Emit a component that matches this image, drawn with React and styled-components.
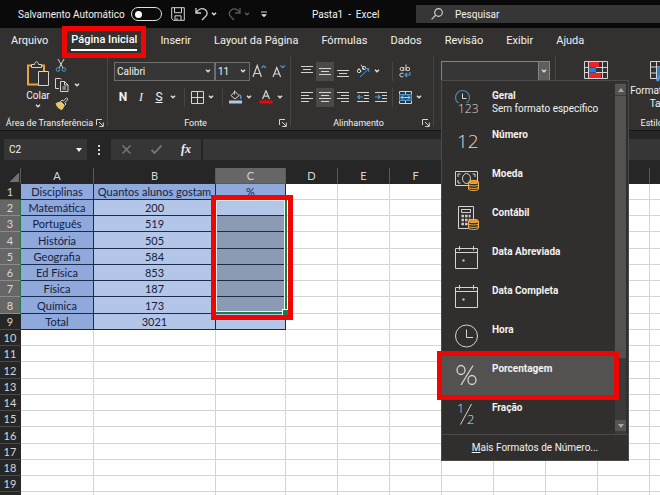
import React from "react";
import styled, { createGlobalStyle, css } from "styled-components";

const GlobalStyle = createGlobalStyle`
  * { box-sizing: border-box; }
  html, body { margin: 0; height: 100%; }
  body { background: #262626; overflow: hidden; }
  body, button, input, select { font-family: Roboto, "Open Sans", sans-serif; font-size: 10px; color: #f3f2f1; }
  button { background: none; border: 0; padding: 0; }
  svg { display: block; flex: none; fill: none; }
`;

/* ---------- shell ---------- */

const Page = styled.div`
  display: flex;
  flex-direction: column;
  height: 100vh;
  overflow: hidden;
  background: #262626;
`;

const TitleBar = styled.header`
  display: flex;
  align-items: center;
  flex: none;
  height: 28px;
  padding-left: 18px;
  background: #0a0a0a;
  white-space: nowrap;
`;

const AutoSave = styled.label`
  display: flex;
  align-items: center;
  gap: 6px;
  width: 153px;
`;

const Switch = styled.input`
  appearance: none;
  display: flex;
  align-items: center;
  flex: none;
  width: 31px;
  height: 14px;
  margin: 0 12px 0 auto;
  padding-left: 3px;
  border: 1px solid #e1dfdd;
  border-radius: 7px;
  &::before {
    content: "";
    width: 7px;
    height: 7px;
    border-radius: 50%;
    background: #fff;
  }
`;

const QuickAccess = styled.div`
  display: grid;
  grid-template-columns: 24px 14px 19px 14px 18px 1fr;
  align-items: center;
  width: 122px;
`;

const DocTitle = styled.h1`
  flex: 1 1 0;
  margin: 0;
  padding-left: 19px;
  font-size: 10px;
  font-weight: 400;
`;

const SearchBox = styled.label`
  display: flex;
  align-items: center;
  gap: 12px;
  flex: none;
  width: 38%;
  height: 18px;
  padding-left: 15px;
  background: #363636;
`;

const BareInput = styled.input`
  min-width: 0;
  flex: 1;
  padding: 0;
  border: 0;
  outline: 0;
  background: transparent;
  &::placeholder { color: #f3f2f1; opacity: 1; }
`;

const TabBar = styled.nav`
  display: flex;
  align-items: center;
  gap: 23px;
  flex: none;
  height: 26px;
  padding-left: 11px;
  background: #323130;
`;

const Tab = styled.button`
  position: relative;
  height: 20px;
  font-size: 11px;
  line-height: 18px;
  white-space: nowrap;
  ${(p) =>
    p.$active &&
    css`
      font-weight: 500;
      border-bottom: 2px solid #fff;
      color: #fff;
      z-index: 2;
      &::after {
        content: "";
        position: absolute;
        inset: -5px -9px -9px;
        border: 5px solid #f00505;
      }
    `}
`;

/* ---------- ribbon ---------- */

const Ribbon = styled.div`
  display: flex;
  flex: none;
  height: 77px;
  background: #323130;
  border-bottom: 1px solid #161616;
`;

const Group = styled.section`
  display: flex;
  flex-direction: column;
  flex: none;
  width: ${(p) => p.$width}px;
  background: linear-gradient(#484644, #484644) right 1px top 2px / 1px 70px no-repeat;
`;

const GroupBody = styled.div`
  display: flex;
  flex: 1;
  flex-direction: ${(p) => (p.$column ? "column" : "row")};
  padding: 4px 0 0 ${(p) => p.$inset || 0}px;
`;

const GroupFooter = styled.div`
  display: grid;
  grid-template-columns: 1fr 12px;
  align-items: center;
  height: 15px;
  padding: 0 1px 0 3px;
  font-size: 9px;
  text-align: center;
  white-space: nowrap;
`;

const ToolRow = styled.div`
  display: grid;
  grid-template-columns: ${(p) => p.$columns};
  align-items: center;
  height: 26px;
`;

const Tool = styled.button`
  display: grid;
  place-items: center;
  width: ${(p) => p.$width || 18}px;
  height: 19px;
  background: ${(p) => (p.$pressed ? "#4a4948" : "transparent")};
  font-size: 12px;
  font-weight: ${(p) => (p.$bold ? 700 : 400)};
  font-style: ${(p) => (p.$italic ? "italic" : "normal")};
  font-family: ${(p) => (p.$italic ? '"Liberation Serif", serif' : "inherit")};
  text-decoration: ${(p) => (p.$underline ? "underline" : "none")};
`;

const BigTool = styled.button`
  display: flex;
  flex-direction: column;
  align-items: center;
  gap: 2px;
  flex: none;
  width: ${(p) => p.$width}px;
  line-height: 13px;
  padding-top: 3px;
`;

const SmallStack = styled.div`
  display: flex;
  flex-direction: column;
  gap: 6px;
  padding-top: 1px;
`;

const StackRow = styled.div`
  display: flex;
  align-items: center;
  gap: 5px;
  height: 13px;
`;

const Divider = styled.span`
  width: 1px;
  height: 19px;
  background: #484644;
`;

const PickerBox = styled.span`
  display: grid;
  align-items: center;
  width: 100%;
  border: 1px solid #6f6d6b;
  background: #363636;
  height: 19px;
  & > * { grid-area: 1 / 1; }
  & > svg { justify-self: end; margin-right: 3px; pointer-events: none; }
`;

const PickerSelect = styled.select`
  appearance: none;
  width: 100%;
  height: 17px;
  padding: 0 2px;
  border: 0;
  background: transparent;
`;

const FormatPicker = styled.div`
  position: relative;
  display: flex;
  width: 109px;
  height: 20px;
  margin-top: 3px;
  border: 1px solid #85827f;
  background: #363636;
`;

const DropButton = styled.button`
  display: grid;
  place-items: center;
  width: 11px;
  background: #605e5c;
  border-left: 1px solid #85827f;
`;

/* ---------- format menu ---------- */

const Menu = styled.div`
  position: absolute;
  top: 18px;
  left: -1px;
  z-index: 5;
  width: 188px;
  border: 1px solid #4b4a48;
  background: #302f2d;
`;

const MenuScroll = styled.div`
  display: grid;
  grid-template-columns: 1fr 11px;
  gap: 1px;
  padding: 2px 2px 0 0;
`;

const MenuItem = styled.button`
  display: grid;
  grid-template-columns: 34px 1fr;
  gap: 16px;
  width: 100%;
  height: 39px;
  padding-top: 6px;
  text-align: left;
  line-height: 13px;
  background: ${(p) => (p.$active ? "#535250" : "transparent")};
  outline: ${(p) => (p.$active ? "5px solid #f00505" : "none")};
  position: relative;
  z-index: ${(p) => (p.$active ? 1 : 0)};
  & > svg { justify-self: end; margin-right: -3px; }
  strong { display: block; font-weight: 700; }
`;

const ScrollTrack = styled.div`
  display: grid;
  grid-template-rows: 11px 262px 1fr 11px;
  gap: 1px;
  padding-top: 1px;
  padding-bottom: 3px;
  background: #3b3a39;
`;

const ScrollArrow = styled.button`
  display: grid;
  place-items: center;
  background: #555453;
`;

const ScrollThumb = styled.span`
  background: #535250;
`;

const MenuFooter = styled.button`
  width: 100%;
  height: 26px;
  border-top: 1px solid #4b4a48;
  text-align: center;
`;

/* ---------- formula bar ---------- */

const FormulaBar = styled.div`
  display: flex;
  flex: none;
  gap: 2px;
  height: 37px;
  padding: 8px 0 8px 4px;
`;

const NameBox = styled.label`
  display: flex;
  align-items: center;
  width: 83px;
  padding: 0 5px;
  background: #363636;
`;

const Dots = styled.span`
  display: grid;
  place-items: center;
  width: 20px;
`;

const FormulaTools = styled.div`
  display: grid;
  grid-template-columns: repeat(3, 1fr);
  place-items: center;
  width: 90px;
  background: #363636;
`;

const FormulaInput = styled.input`
  flex: 1;
  min-width: 0;
  border: 0;
  padding: 0 6px;
  background: #363636;
`;

const FxButton = styled.button`
  font: italic 700 12px "Liberation Serif", serif;
`;

/* ---------- sheet ---------- */

const Sheet = styled.main`
  position: relative;
  flex: 1;
  min-height: 0;
  overflow: hidden;
  background: #fff;
`;

const Grid = styled.table`
  table-layout: fixed;
  width: 702px;
  border-collapse: separate;
  border-spacing: 0;
  font: 11px/15px Lato, "Open Sans", sans-serif;
  color: #14213d;
  tr { height: 16px; }
  tbody tr:nth-child(4n) { height: 17px; }
`;

const ColHead = styled.th`
  padding: 0;
  height: 16px;
  font-weight: 400;
  color: #d6d6d6;
  background: ${(p) => (p.$selected ? "#666" : "#262626")};
  border-right: 1px solid #5a5a5a;
  border-bottom: 1px solid ${(p) => (p.$selected ? "#1f7a48" : "#262626")};
`;

const Corner = styled(ColHead)`
  background: linear-gradient(135deg, transparent 50%, #707070 50%) 9px 4px / 10px 10px no-repeat #262626;
`;

const RowHead = styled.th`
  padding: 0;
  font-weight: 400;
  color: #d6d6d6;
  background: ${(p) => (p.$selected ? "#666" : "#262626")};
  border-bottom: 1px solid ${(p) => (p.$selected ? "#8a8a8a" : "#4a4a4a")};
  border-right: 1px solid ${(p) => (p.$selected ? "#1f7a48" : "#262626")};
`;

const cellFill = { plain: "#fff", header: "#8fa9dc", value: "#b4c6e7", picked: "#8c9ab4" };

const Cell = styled.td`
  padding: 0;
  text-align: center;
  white-space: nowrap;
  overflow: hidden;
  background: ${(p) => cellFill[p.$kind]};
  border-right: 1px solid ${(p) => (p.$kind === "plain" ? "#d4d4d4" : "#1d2b4a")};
  border-bottom: 1px solid ${(p) => (p.$kind === "plain" ? "#d4d4d4" : "#1d2b4a")};
`;

const SelectionMark = styled.div`
  position: absolute;
  top: 27px;
  left: 211px;
  width: 82px;
  height: 125px;
  border: 5px solid #f00505;
`;

const SelectionRange = styled.div`
  position: relative;
  width: 71px;
  height: 114px;
  border: solid #1f7a48;
  border-width: 0 2px 2px 0;
  box-shadow: inset 1px 1px 0 #e9f3ec, inset -1px -1px 0 #e9f3ec;
  &::after {
    content: "";
    position: absolute;
    right: -3px;
    bottom: -3px;
    width: 5px;
    height: 5px;
    background: #1f7a48;
    border: solid #fff;
    border-width: 1px 0 0 1px;
  }
`;

/* ---------- icons ---------- */

const Svg = ({ w, h, children, ...rest }) => (
  <svg width={w} height={h} viewBox={`0 0 ${w} ${h}`} stroke="#d6d4d2" aria-hidden="true" {...rest}>
    {children}
  </svg>
);

const GlyphText = styled.text`
  font-family: "Open Sans", sans-serif;
  font-weight: 300;
  fill: #dcdad8;
  stroke: none;
`;

const Chevron = ({ color = "#e6e4e2" }) => (
  <Svg w={6} h={4} stroke={color} strokeWidth="1.3"><path d="M1 .7 3 2.8 5 .7" /></Svg>
);

const Launcher = () => (
  <Svg w={8} h={8}><path d="M.5 6V.5H6M3 3l4 4M7.3 3.5v4h-4" /></Svg>
);

const SaveIcon = () => (
  <Svg w={14} h={14}><path d="M.7.7h12.6v12.6H2.5L.7 11.6zM3.5.7v5h7v-5M4 13.3V8.8h6v4.5M6 13v-2" /></Svg>
);

const UndoIcon = () => (
  <Svg w={14} h={14} strokeWidth="1.3"><path d="M1 1v5h5M1 6c2-4 6-5.500 9-3.500 3 2.500 2.500 5 .5 7L7 13" /></Svg>
);

const RedoIcon = () => (
  <Svg w={14} h={14} stroke="#5a5a5a" strokeWidth="1.3"><path d="M12 1v5H7M12 6C10 2 6 .8 3.200 3 .5 5.500 1 8 2.800 9.800L6 13" /></Svg>
);

const CustomizeIcon = () => (
  <Svg w={8} h={7}><path d="M1 1h6" /><path d="M1 3.200h6L4 6.200z" fill="#e6e4e2" stroke="none" /></Svg>
);

const SearchIcon = () => (
  <Svg w={12} h={12} strokeWidth="1.2"><circle cx="7.500" cy="4.500" r="3.800" /><path d="M4.800 7.200.6 11.400" /></Svg>
);

const PasteIcon = () => (
  <Svg w={24} h={26}>
    <path d="M12 23.500H2V4.500h4M14 4.500h4V10" stroke="#e8a33d" strokeWidth="2" />
    <path d="M5.500 6.500v-3h3C8.500 0 12.500 0 12.500 3.500h3v3z" fill="#323130" />
    <path d="M12.500 10.500h10v14h-10z" fill="#323130" />
  </Svg>
);

const CutIcon = () => (
  <Svg w={12} h={13}>
    <path d="M3 0l5 9M9 0 4 9" />
    <circle cx="3" cy="10.500" r="1.800" stroke="#4a9bd4" /><circle cx="9" cy="10.500" r="1.800" stroke="#4a9bd4" />
  </Svg>
);

const CopyIcon = () => (
  <Svg w={14} h={14}>
    <path d="M4 10.500H.5V.5h5l1 1M5.500 3.500h4l3.500 3.500v6.500H5.500zM9.500 3.500V7H13M7.500 9h3.500M7.500 11h3.500" />
  </Svg>
);

const BrushIcon = () => (
  <Svg w={14} h={13}>
    <path d="M1 6.500 5 5l4 4-2 3.500C4 12 2 10 1 6.500z" fill="#e9c46a" stroke="#e9c46a" />
    <path d="M5.500 4.500l4 4 1.500-1.500-1.200-1.300L13 2.200 11.500.8 8.300 4 7 3z" fill="#323130" />
  </Svg>
);

const GrowIcon = ({ down }) => (
  <Svg w={15} h={14} strokeWidth="1.200">
    <path d={down ? "M1 13 4.800 3.500 8.600 13M2.300 10h5" : "M1 13 5.200 1.500 9.400 13M2.500 9.500h5.400"} />
    <path d={down ? "M8.500 1.500l2.200 2.200 2.200-2.200" : "M9.500 4l2.200-2.200L13.900 4"} stroke="#4a9bd4" />
  </Svg>
);

const BordersIcon = () => (
  <Svg w={13} h={13}><path d="M.5.5h12v12H.5zM6.500.5v12M.5 6.500h12" /></Svg>
);

const FillIcon = () => (
  <Svg w={15} h={14}>
    <path d="M6.500.5v4M3 5.500 7 1.500l4 4-4 3.500z" />
    <path d="M11.500 4.500c1.500 1 1.500 3 1 4.500" stroke="#4a9bd4" strokeWidth="1.500" />
    <path d="M1 10.500h13v3H1z" fill="#b4c6e7" stroke="none" />
  </Svg>
);

const FontColorIcon = () => (
  <Svg w={14} h={14}>
    <path d="M3.500 9 7 .8 10.500 9M4.700 6.200h4.600" strokeWidth="1.200" />
    <path d="M.5 10.500h13v3H.5z" fill="#f00505" stroke="none" />
  </Svg>
);

const lineSets = {
  top: [[0, 12, 0], [2, 10, 3], [0, 12, 6]],
  middle: [[0, 12, 2], [2, 10, 5], [0, 12, 8]],
  bottom: [[0, 12, 4], [2, 10, 7], [0, 12, 10]],
  left: [[0, 12, 0], [0, 8, 3], [0, 12, 6], [0, 8, 9]],
  center: [[0, 12, 0], [2, 10, 3], [0, 12, 6], [2, 10, 9]],
  right: [[0, 12, 0], [4, 12, 3], [0, 12, 6], [4, 12, 9]],
};

const AlignIcon = ({ kind }) => (
  <Svg w={12} h={11}>
    {lineSets[kind].map(([a, b, y]) => <path key={y} d={`M${a} ${y + 0.5}H${b}`} />)}
  </Svg>
);

const OrientationIcon = () => (
  <Svg w={14} h={14}>
    <circle cx="3" cy="7" r="1.700" /><path d="M2.500 4l2.700 4M5 .8l3.500 5" />
    <circle cx="8" cy="4" r="1.700" />
    <path d="M4 13l8.500-8M9 4.500h3.800V8" stroke="#4a9bd4" />
  </Svg>
);

const WrapIcon = () => (
  <Svg w={12} h={14}>
    <circle cx="2.800" cy="5" r="1.700" /><path d="M4.800 3v4M7 .5v6.500" /><circle cx="9" cy="5" r="1.700" />
    <path d="M4.500 9.500C2.500 8.500.8 9.500.8 11s1.500 2.500 3.500 1.500" />
    <path d="M10.800 8v3H6M8 9l-2 2 2 2" stroke="#4a9bd4" strokeWidth="1.200" />
  </Svg>
);

const IndentIcon = ({ right }) => (
  <Svg w={13} h={11}>
    <path d="M0 .5h12M7 3.500h5M7 6.500h5M0 9.500h12" />
    <path d={right ? "M0 5h5M3 3l2 2-2 2" : "M.8 5h5M2.800 3l-2 2 2 2"} stroke="#4a9bd4" strokeWidth="1.200" />
  </Svg>
);

const MergeIcon = () => (
  <Svg w={13} h={13}>
    <path d="M.5 3.500h12v6H.5z" fill="#26587a" stroke="#4a9bd4" />
    <path d="M.5 3V.5h12V3M6.500.5V3M.5 10v2.500h12V10M6.500 10v2.500" />
    <path d="M2 6.500h9M4 4.500l-2 2 2 2M9 4.500l2 2-2 2" stroke="#9fd0f2" />
  </Svg>
);

const CondFormatIcon = () => (
  <Svg w={24} h={18}>
    <path d="M5 1h10v5H5zM5 12h12v5.500H5z" fill="#e8252b" stroke="none" />
    <path d="M5 6.500h7v5H5z" fill="#2b7cd3" stroke="none" />
    <path d="M.5.500h23v17H.5zM.5 6.500h4.500M12 6.500h11.500M.5 11.500h4.500M12 11.500h11.500M4.500.5v17M18.500.500v17" />
  </Svg>
);

const TableFormatIcon = () => (
  <Svg w={30} h={21}>
    <path d="M.5.5h23v17H.5zM.5 6h23M.5 12h23M6.500.5v17M15 .5v17" />
    <path d="M7 6.500h16v11H7z" fill="#2b7cd3" stroke="none" />
    <path d="M7 20 10 15" stroke="#4a9bd4" strokeWidth="3" />
  </Svg>
);

const Coins = ({ x, y }) => (
  <g transform={`translate(${x} ${y})`} stroke="#f0b14a">
    <path d="M.5 2v7c0 2 10 2 10 0V2" fill="#302f2d" />
    <path d="M.5 4.500c0 2 10 2 10 0M.5 7c0 2 10 2 10 0" />
    <ellipse cx="5.500" cy="2" rx="5" ry="1.600" fill="#f0901e" />
  </g>
);

const GeneralIcon = () => (
  <Svg w={24} h={26}>
    <circle cx="7.500" cy="8.500" r="7" stroke="#4f86a8" strokeWidth="1.200" />
    <path d="M7.500 4.500v5h4" />
    <path d="M3 14h21v12H3z" fill="#302f2d" stroke="none" />
    <GlyphText x="3" y="24" fontSize="12">123</GlyphText>
  </Svg>
);

const NumberIcon = () => (
  <Svg w={24} h={26}><GlyphText x="2" y="20" fontSize="19">12</GlyphText></Svg>
);

const CurrencyIcon = () => (
  <Svg w={24} h={26}>
    <path d="M.5 4.500h22v14H.5zM5.500 7H3v3M3 13v3h2.500M17.500 7H20v3" />
    <ellipse cx="11.500" cy="11.500" rx="4" ry="5" />
    <Coins x="13" y="13" />
  </Svg>
);

const AccountingIcon = () => (
  <Svg w={24} h={26}>
    <path d="M3.500.5h15v22h-15zM6.500 3.500h9v3h-9z" />
    <path d="M6.500 10h9M6.500 14h9M6.500 18h6" strokeWidth="2.400" strokeDasharray="2.400 1.200" />
    <Coins x="13" y="13" />
  </Svg>
);

const CalendarIcon = () => (
  <Svg w={24} h={26}>
    <path d="M.5 3.500h22v20H.5zM.5 7.500h22M4.500 1v4.500M18.500 1v4.500" />
    <path d="M7.500 14.500h2v2h-2z" fill="#d6d4d2" stroke="none" />
  </Svg>
);

const ClockIcon = () => (
  <Svg w={24} h={26}><circle cx="11.500" cy="13" r="11" /><path d="M11.500 6.500v8h6.500" /></Svg>
);

const PercentIcon = () => (
  <Svg w={24} h={26} strokeWidth="1.300">
    <ellipse cx="6" cy="8" rx="4" ry="4.500" /><ellipse cx="17" cy="18" rx="4" ry="4.500" /><path d="M18 3.500 6 23" />
  </Svg>
);

const FractionIcon = () => (
  <Svg w={24} h={26}>
    <GlyphText x="2" y="12" fontSize="13">1</GlyphText>
    <GlyphText x="12" y="23" fontSize="13">2</GlyphText>
    <path d="M16.500 3 5.500 23.500" />
  </Svg>
);

/* ---------- data ---------- */

const tabs = ["Arquivo", "Página Inicial", "Inserir", "Layout da Página", "Fórmulas", "Dados", "Revisão", "Exibir", "Ajuda"];

const formats = [
  { name: "Geral", note: "Sem formato específico", Icon: GeneralIcon },
  { name: "Número", Icon: NumberIcon },
  { name: "Moeda", Icon: CurrencyIcon },
  { name: "Contábil", Icon: AccountingIcon },
  { name: "Data Abreviada", Icon: CalendarIcon },
  { name: "Data Completa", Icon: CalendarIcon },
  { name: "Hora", Icon: ClockIcon },
  { name: "Porcentagem", Icon: PercentIcon },
  { name: "Fração", Icon: FractionIcon },
];

const columns = [
  ["A", 73], ["B", 122], ["C", 70], ["D", 52], ["E", 52], ["F", 52],
  ["G", 52], ["H", 52], ["I", 52], ["J", 52], ["K", 52],
];

const rows = [
  ["Disciplinas", "Quantos alunos gostam", "%"],
  ["Matemática", 200],
  ["Português", 519],
  ["História", 505],
  ["Geografia", 584],
  ["Ed Física", 853],
  ["Física", 187],
  ["Química", 173],
  ["Total", 3021],
];

const cellKind = (row, col) => {
  if (row > 8 || col > 2) return "plain";
  if (row === 0 || col === 0) return "header";
  if (col === 2 && row > 1 && row < 8) return "picked";
  return "value";
};

/* ---------- parts ---------- */

const Picker = ({ label, value }) => (
  <PickerBox>
    <PickerSelect aria-label={label} defaultValue={value}><option>{value}</option></PickerSelect>
    <Chevron />
  </PickerBox>
);

const MoreButton = ({ label, color }) => (
  <Tool $width={10} aria-label={label}><Chevron color={color} /></Tool>
);

const RibbonGroup = ({ title, width, inset, column, launcher, children }) => (
  <Group $width={width} aria-label={title}>
    <GroupBody $inset={inset} $column={column}>{children}</GroupBody>
    <GroupFooter>
      <span>{title}</span>
      {launcher && <button aria-label={`Opções de ${title}`}><Launcher /></button>}
    </GroupFooter>
  </Group>
);

const FormatMenu = () => (
  <Menu role="menu" aria-label="Formato de Número">
    <MenuScroll>
      <div>
        {formats.map(({ name, note, Icon }) => (
          <MenuItem key={name} role="menuitem" $active={name === "Porcentagem"}>
            <Icon />
            <span><strong>{name}</strong>{note}</span>
          </MenuItem>
        ))}
      </div>
      <ScrollTrack>
        <ScrollArrow aria-label="Rolar para cima"><Svg w={6} h={4}><path d="M0 4 3 0l3 4z" fill="#a8a6a4" stroke="none" /></Svg></ScrollArrow>
        <ScrollThumb />
        <span />
        <ScrollArrow aria-label="Rolar para baixo"><Svg w={6} h={4}><path d="M0 0l3 4 3-4z" fill="#a8a6a4" stroke="none" /></Svg></ScrollArrow>
      </ScrollTrack>
    </MenuScroll>
    <MenuFooter role="menuitem"><u>M</u>ais Formatos de Número...</MenuFooter>
  </Menu>
);

export default function App() {
  return (
    <Page>
      <GlobalStyle />
      <TitleBar>
        <AutoSave>Salvamento Automático<Switch type="checkbox" role="switch" /></AutoSave>
        <QuickAccess>
          <button aria-label="Salvar"><SaveIcon /></button>
          <button aria-label="Desfazer"><UndoIcon /></button>
          <MoreButton label="Histórico de desfazer" />
          <button aria-label="Refazer"><RedoIcon /></button>
          <MoreButton label="Histórico de refazer" color="#5a5a5a" />
          <button aria-label="Personalizar"><CustomizeIcon /></button>
        </QuickAccess>
        <DocTitle>Pasta1&nbsp; -&nbsp; Excel</DocTitle>
        <SearchBox><SearchIcon /><BareInput aria-label="Pesquisar" placeholder="Pesquisar" /></SearchBox>
      </TitleBar>

      <TabBar>
        {tabs.map((name) => <Tab key={name} $active={name === "Página Inicial"}>{name}</Tab>)}
      </TabBar>

      <Ribbon>
        <RibbonGroup title="Área de Transferência" width={109} inset={21} launcher>
          <BigTool $width={34}><PasteIcon />Colar<Chevron /></BigTool>
          <SmallStack>
            <StackRow><button aria-label="Recortar"><CutIcon /></button></StackRow>
            <StackRow><button aria-label="Copiar"><CopyIcon /></button><Chevron /></StackRow>
            <StackRow><button aria-label="Pincel de Formatação"><BrushIcon /></button></StackRow>
          </SmallStack>
        </RibbonGroup>

        <RibbonGroup title="Fonte" width={183} inset={5} column launcher>
          <ToolRow $columns="101px 35px 20px 18px">
            <Picker label="Fonte" value="Calibri" />
            <Picker label="Tamanho da fonte" value="11" />
            <Tool aria-label="Aumentar fonte"><GrowIcon /></Tool>
            <Tool aria-label="Diminuir fonte"><GrowIcon down /></Tool>
          </ToolRow>
          <ToolRow $columns="18px 18px 18px 16px 4px 18px 16px 4px 18px 13px 18px 10px">
            <Tool $bold aria-label="Negrito">N</Tool>
            <Tool $italic aria-label="Itálico">I</Tool>
            <Tool $underline aria-label="Sublinhado">S</Tool>
            <MoreButton label="Tipos de sublinhado" />
            <Divider />
            <Tool aria-label="Bordas"><BordersIcon /></Tool>
            <MoreButton label="Mais bordas" />
            <Divider />
            <Tool aria-label="Cor de preenchimento"><FillIcon /></Tool>
            <MoreButton label="Cores de preenchimento" />
            <Tool aria-label="Cor da fonte"><FontColorIcon /></Tool>
            <MoreButton label="Cores da fonte" />
          </ToolRow>
        </RibbonGroup>

        <RibbonGroup title="Alinhamento" width={143} inset={6} column launcher>
          <ToolRow $columns="18px 18px 20px 18px 20px 4px 18px 14px">
            <Tool aria-label="Alinhar em cima"><AlignIcon kind="top" /></Tool>
            <Tool $pressed aria-label="Alinhar no meio"><AlignIcon kind="middle" /></Tool>
            <Tool aria-label="Alinhar embaixo"><AlignIcon kind="bottom" /></Tool>
            <Tool aria-label="Orientação"><OrientationIcon /></Tool>
            <MoreButton label="Mais orientações" />
            <Divider />
            <Tool aria-label="Quebrar texto"><WrapIcon /></Tool>
          </ToolRow>
          <ToolRow $columns="18px 18px 20px 18px 20px 4px 18px 14px">
            <Tool aria-label="Alinhar à esquerda"><AlignIcon kind="left" /></Tool>
            <Tool $pressed aria-label="Centralizar"><AlignIcon kind="center" /></Tool>
            <Tool aria-label="Alinhar à direita"><AlignIcon kind="right" /></Tool>
            <Tool aria-label="Diminuir recuo"><IndentIcon /></Tool>
            <Tool aria-label="Aumentar recuo"><IndentIcon right /></Tool>
            <Divider />
            <Tool aria-label="Mesclar e centralizar"><MergeIcon /></Tool>
            <MoreButton label="Mais opções de mesclagem" />
          </ToolRow>
        </RibbonGroup>

        <RibbonGroup title="Número" width={122} inset={6}>
          <FormatPicker>
            <BareInput aria-label="Formato de número" />
            <DropButton aria-label="Abrir formatos de número" aria-expanded="true"><Chevron /></DropButton>
            <FormatMenu />
          </FormatPicker>
        </RibbonGroup>

        <RibbonGroup title="Estilos" width={204} inset={4}>
          <BigTool $width={69} aria-label="Formatação Condicional"><CondFormatIcon /></BigTool>
          <BigTool $width={69}><TableFormatIcon /><span>Formatar como<br />Tabela</span></BigTool>
        </RibbonGroup>
      </Ribbon>

      <FormulaBar>
        <NameBox>
          <BareInput aria-label="Caixa de nome" defaultValue="C2" />
          <Svg w={6} h={4}><path d="M0 0h6L3 4z" fill="#f3f2f1" stroke="none" /></Svg>
        </NameBox>
        <Dots><Svg w={2} h={10} strokeWidth="2"><path d="M1 0v2M1 4v2M1 8v2" /></Svg></Dots>
        <FormulaTools>
          <button aria-label="Cancelar"><Svg w={9} h={9} stroke="#777" strokeWidth="1.500"><path d="M.5.5l8 8M8.500.5l-8 8" /></Svg></button>
          <button aria-label="Inserir"><Svg w={11} h={9} stroke="#777" strokeWidth="1.800"><path d="M.5 5l3 3L10.500.5" /></Svg></button>
          <FxButton aria-label="Inserir função">fx</FxButton>
        </FormulaTools>
        <FormulaInput aria-label="Barra de fórmulas" />
      </FormulaBar>

      <Sheet>
        <Grid>
          <colgroup>
            <col width="21" />
            {columns.map(([name, width]) => <col key={name} width={width} />)}
          </colgroup>
          <thead>
            <tr>
              <Corner aria-label="Selecionar tudo" />
              {columns.map(([name]) => <ColHead key={name} scope="col" $selected={name === "C"}>{name}</ColHead>)}
            </tr>
          </thead>
          <tbody>
            {Array.from({ length: 20 }, (_, r) => (
              <tr key={r}>
                <RowHead scope="row" $selected={r > 0 && r < 8}>{r + 1}</RowHead>
                {columns.map(([name], c) => <Cell key={name} $kind={cellKind(r, c)}>{rows[r]?.[c]}</Cell>)}
              </tr>
            ))}
          </tbody>
        </Grid>
        <SelectionMark><SelectionRange /></SelectionMark>
      </Sheet>
    </Page>
  );
}
